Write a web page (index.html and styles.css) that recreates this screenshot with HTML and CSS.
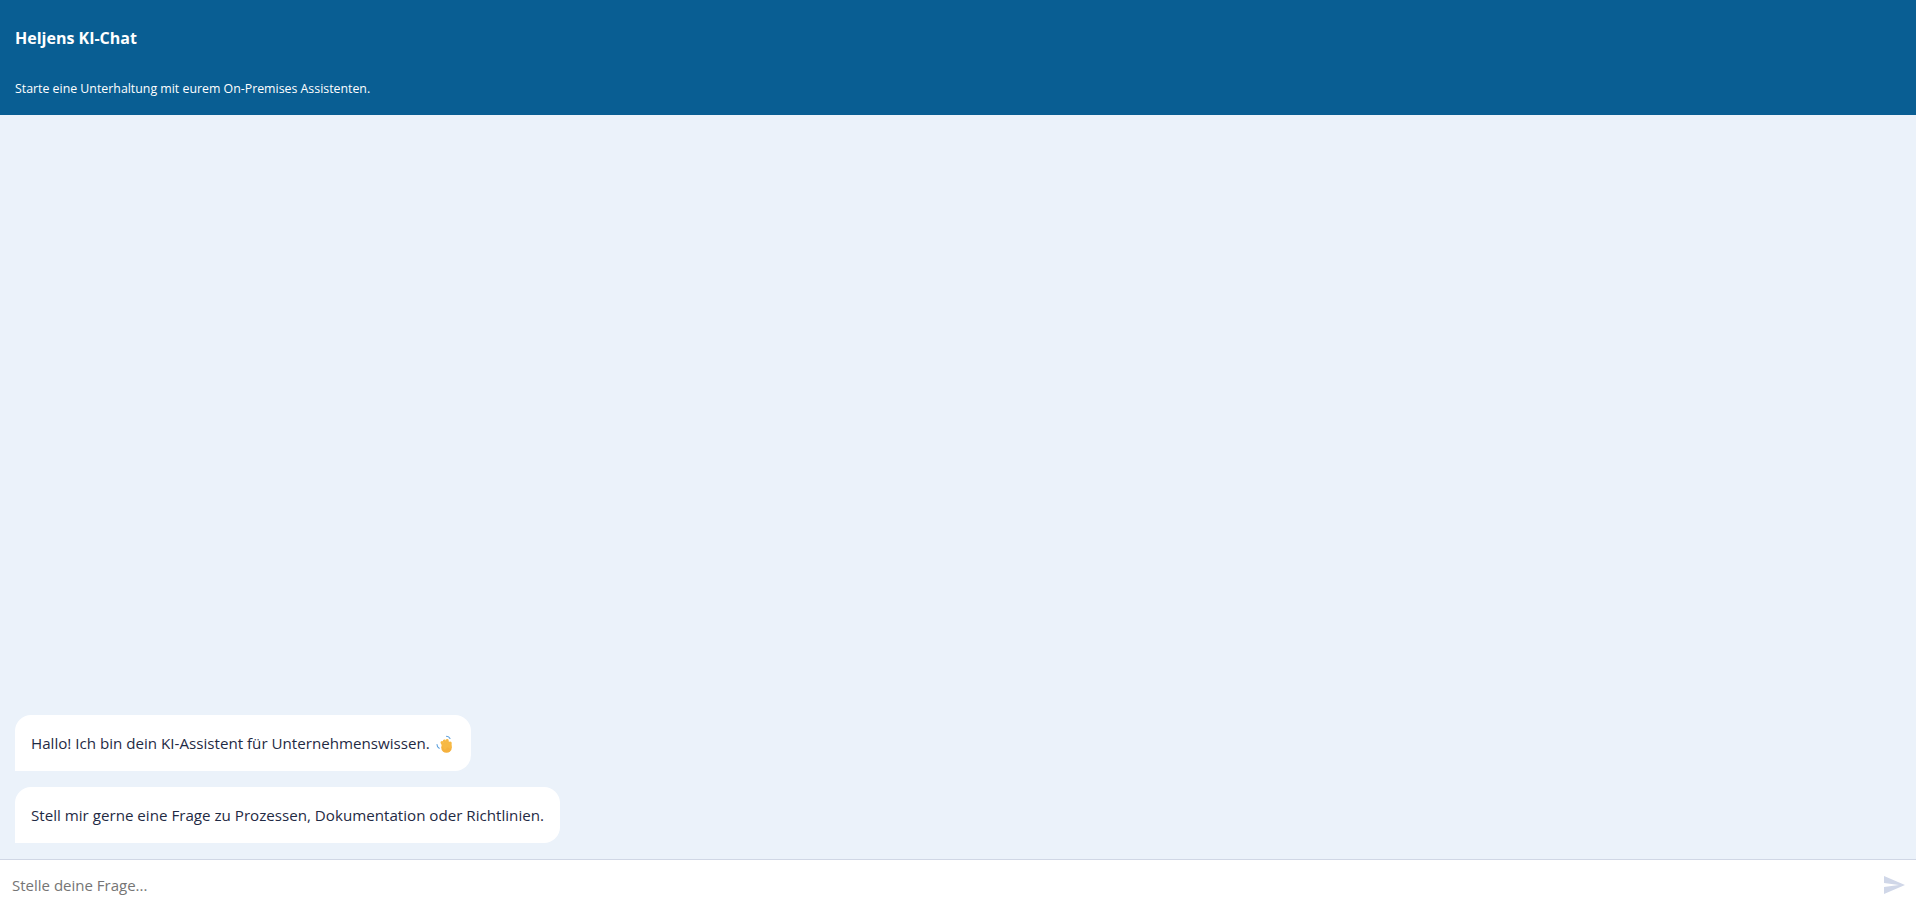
FILE: index.html
```html
<!DOCTYPE html>
<html lang="de">
<head>
  <meta charset="UTF-8">
  <title>Heljens KI-Chat</title>
  <link rel="stylesheet" href="styles.css">
</head>
<body>
<div class="chat-page">
  <!-- Kopfzeile -->
  <header class="chat-header">
    <h1>Heljens KI-Chat</h1>
    <p>Starte eine Unterhaltung mit eurem On-Premises Assistenten.</p>
  </header>

  <!-- Nachrichten -->
  <main class="messages">
    <div class="bubble">
      Hallo! Ich bin dein KI-Assistent für Unternehmenswissen.
      <svg class="wave" viewBox="0 0 20 20" width="20" height="20" aria-hidden="true">
        <g transform="translate(1 2)">
          <ellipse cx="10.500" cy="12.500" rx="5.300" ry="5.300" fill="#f5b13d"/>
          <g fill="none" stroke="#f7b944" stroke-width="3" stroke-linecap="round">
            <path d="M9 13 6 7.500"/>
            <path d="M10 11.500 8.400 6"/>
            <path d="M12 11 11.200 5.600"/>
            <path d="M14 12 14.200 8"/>
          </g>
          <g fill="none" stroke="#5b9fdc" stroke-width="1.100" stroke-linecap="round">
            <path d="M10.500 1.200c1.500 0 2.800.8 3.500 2.300"/>
            <path d="M1 9.500c0 1.700.8 3 2.200 3.800"/>
          </g>
        </g>
      </svg>
    </div>
    <div class="bubble">Stell mir gerne eine Frage zu Prozessen, Dokumentation oder Richtlinien.</div>
  </main>

  <!-- Eingabe -->
  <form class="input-bar">
    <input type="text" class="question" placeholder="Stelle deine Frage...">
    <button type="button" class="send-btn" aria-label="Senden">
      <svg viewBox="0 0 24 24" width="24" height="24"><path d="M2.010 21 23 12 2.010 3 2 10l15 2-15 2z"/></svg>
    </button>
  </form>
</div>
</body>
</html>
```

FILE: styles.css
```css
* {
  box-sizing: border-box;
}

body {
  margin: 0;
  font-family: "Open Sans", "Noto Sans", sans-serif;
  background-color: #ebf2fa;
  color: #1f2a44;
}

.chat-page {
  display: flex;
  flex-direction: column;
  height: 100vh;
}

.chat-header {
  height: 115px;
  padding: 27px 15px 0;
  background-color: #095e93;
  color: #fff;
}

.chat-header h1 {
  margin: 0;
  font-size: 16px;
  line-height: 22px;
  font-weight: 700;
}

.chat-header p {
  margin: 31px 0 0;
  font-size: 12.350px;
  line-height: 18px;
}

.messages {
  flex: 1;
  display: flex;
  flex-direction: column;
  justify-content: flex-end;
  align-items: flex-start;
  gap: 16px;
  padding: 0 15px 16px;
}

.bubble {
  display: flex;
  align-items: center;
  gap: 5px;
  height: 56px;
  padding: 0 16px;
  background-color: #fff;
  border-radius: 16px 16px 16px 0;
  font-size: 15.150px;
}

.wave {
  flex: none;
}

.input-bar {
  display: flex;
  align-items: center;
  height: 49px;
  padding: 1px 10px 0 12px;
  background-color: #fff;
  border-top: 1px solid #d0d7e5;
}

.question {
  flex: 1;
  border: none;
  outline: none;
  padding: 0;
  font-family: inherit;
  font-size: 15px;
  color: #1f2a44;
}

.question::placeholder {
  color: #757575;
  opacity: 1;
}

.send-btn {
  display: flex;
  padding: 0;
  border: none;
  background: none;
  cursor: pointer;
}

.send-btn svg {
  fill: #d0d7e8;
}
```
